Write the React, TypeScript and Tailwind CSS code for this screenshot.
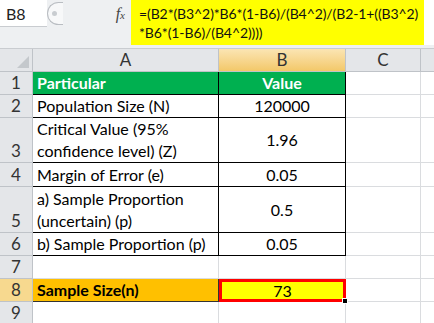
import React from "react";

type Row = {
  n: number;
  h: number;
  a?: string;
  b?: string;
  kind?: "head" | "table" | "result" | "empty";
};

const rows: Row[] = [
  { n: 1, h: 23, a: "Particular", b: "Value", kind: "head" },
  { n: 2, h: 23, a: "Population Size (N)", b: "120000", kind: "table" },
  { n: 3, h: 45, a: "Critical Value (95% confidence level) (Z)", b: "1.96", kind: "table" },
  { n: 4, h: 24, a: "Margin of Error (e)", b: "0.05", kind: "table" },
  { n: 5, h: 46, a: "a) Sample Proportion (uncertain) (p)", b: "0.5", kind: "table" },
  { n: 6, h: 23, a: "b) Sample Proportion (p)", b: "0.05", kind: "table" },
  { n: 7, h: 23, kind: "empty" },
  { n: 8, h: 23, a: "Sample Size(n)", b: "73", kind: "result" },
  { n: 9, h: 23, kind: "empty" },
];

const FormulaBar: React.FC = () => (
  <div className="flex h-[49px] bg-[#eef0f2] border-b border-[#c9ccd0]">
    <div className="w-[47px] h-[27px] bg-white border-b border-[#c9ccd0] pl-[6px] text-[16px] leading-[27px] text-[#222]">
      B8
    </div>
    <div className="w-[16px] h-[23px] mt-[2px] rounded-l-full border border-r-0 border-[#b9bdc2] bg-[#f7f8f9] flex items-center pl-[4px]">
      <div className="w-[5px] h-[5px] rounded-full bg-[#c8ccd0]" />
    </div>
    <div className="w-[68px] h-[27px] flex items-center justify-end pr-[6px]">
      <span className="font-['Liberation_Serif',serif] italic text-[16px] text-[#444]">
        f<span className="text-[11px]">x</span>
      </span>
    </div>
    <div className="w-[293px] h-[45px] bg-[#ffff00] pl-[8px] pt-[4px] text-[14px] tracking-[-0.1px] leading-[19px] text-[#111] whitespace-nowrap overflow-hidden">
      =(B2*(B3^2)*B6*(1-B6)/(B4^2)/(B2-1+((B3^2)
      <br />
      *B6*(1-B6)/(B4^2))))
    </div>
    <div className="flex-1 h-[45px] bg-white" />
  </div>
);

const ColHeader: React.FC = () => (
  <div className="flex h-[23px] bg-[#e4e6e9] border-b border-[#bfc3c8] text-[17px] text-[#333]">
    <div className="w-[33px] border-r border-[#bfc3c8] relative">
      <div className="absolute right-[3px] bottom-[3px] w-0 h-0 border-l-[12px] border-l-transparent border-b-[12px] border-b-[#c4c8cc]" />
    </div>
    <div className="w-[186px] border-r border-[#bfc3c8] flex items-center justify-center">A</div>
    <div className="w-[127px] border-r border-[#bfc3c8] bg-gradient-to-b from-[#fbe5b3] to-[#f3c868] flex items-center justify-center">
      B
    </div>
    <div className="w-[75px] border-r border-[#bfc3c8] flex items-center justify-center">C</div>
    <div className="flex-1" />
  </div>
);

const GridRow: React.FC<{ row: Row }> = ({ row }) => {
  const { kind } = row;
  const rowHeaderBg = row.n === 8 ? "bg-[#f7d98f]" : "bg-[#e4e6e9]";

  let aCls = "bg-white border-b border-r border-[#dadcdf]";
  let bCls = "bg-white border-b border-r border-[#dadcdf]";
  if (kind === "head") {
    aCls = "bg-[#00b050] border-b border-r border-black text-white font-bold";
    bCls = "bg-[#00b050] border-b border-r border-black text-white font-bold";
  } else if (kind === "table") {
    aCls = "bg-white border-b border-r border-black";
    bCls = "bg-white border-b border-r border-black";
  } else if (kind === "result") {
    aCls = "bg-[#ffc000] border-b border-r border-[#333] font-bold";
    bCls = "bg-[#ffff00] border-[3px] border-[#ff0000] relative";
  }

  return (
    <div className="flex" style={{ height: row.h }}>
      <div
        className={`w-[33px] ${rowHeaderBg} border-r border-b border-[#bfc3c8] flex items-end justify-center text-[17px] text-[#333] leading-[22px]`}
      >
        {row.n}
      </div>
      <div className={`w-[186px] ${aCls} pl-[4px] flex items-end text-[16px] leading-[22px]`}>
        <span>{row.a}</span>
      </div>
      <div className={`w-[127px] ${bCls} flex items-center justify-center text-[16px] leading-[22px]`}>
        {row.b}
        {kind === "result" && (
          <div className="absolute right-[-5px] bottom-[-5px] w-[6px] h-[6px] bg-black border border-white" />
        )}
      </div>
      <div className="w-[75px] bg-white border-b border-r border-[#dadcdf]" />
      <div className="flex-1 bg-white border-b border-[#dadcdf]" />
    </div>
  );
};

const App: React.FC = () => {
  return (
    <div className="w-[434px] h-[323px] overflow-hidden bg-white font-['Lato',sans-serif] text-black">
      <FormulaBar />
      <ColHeader />
      {rows.map((row) => (
        <GridRow key={row.n} row={row} />
      ))}
    </div>
  );
};

export default App;
